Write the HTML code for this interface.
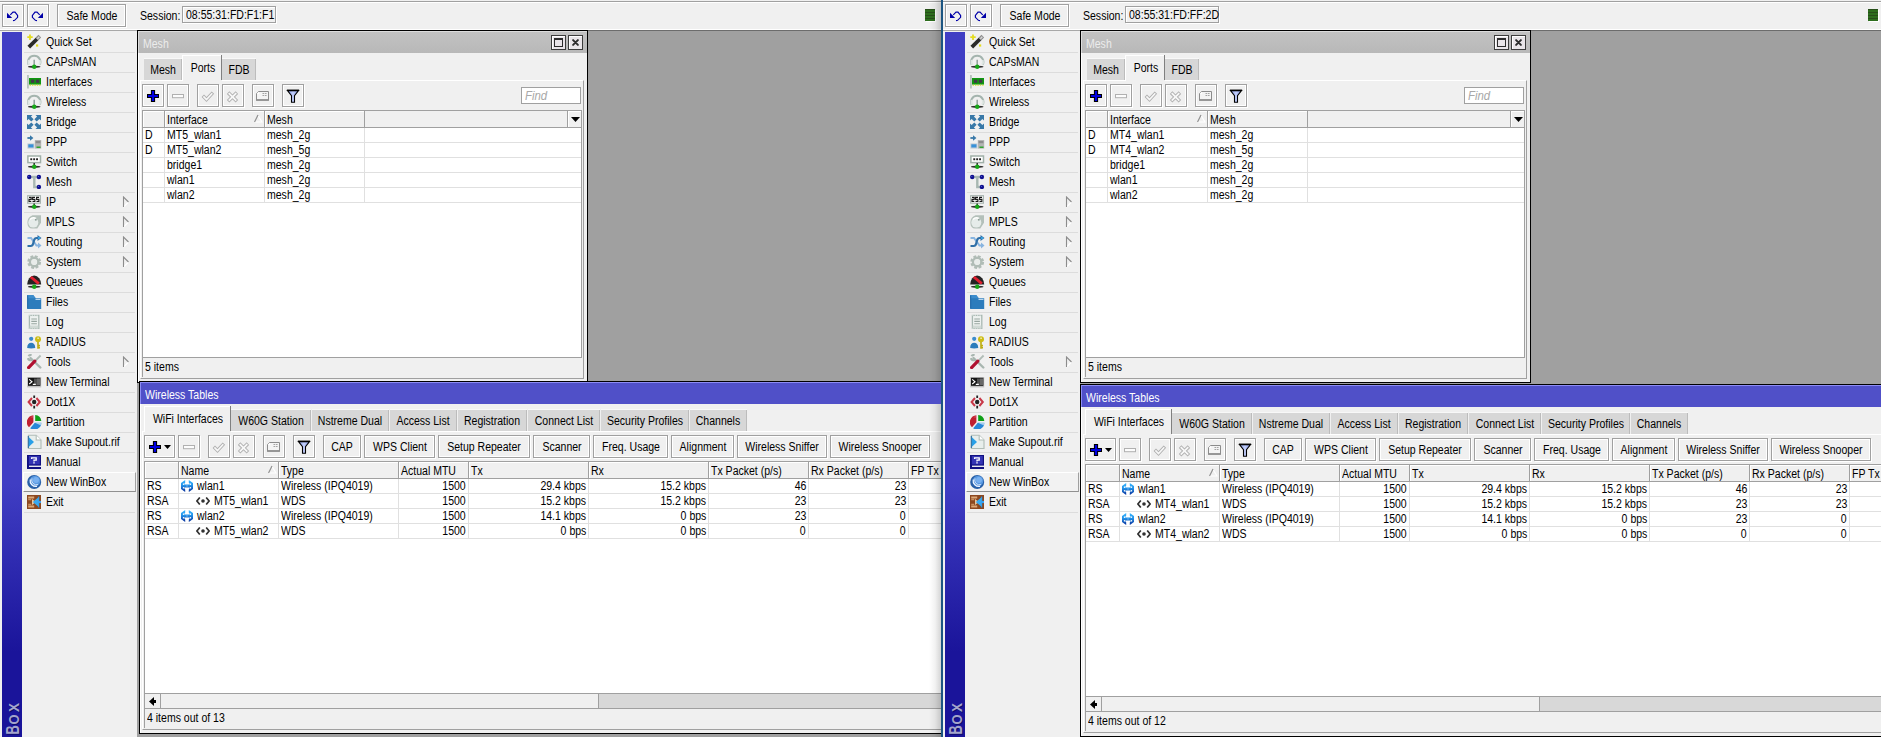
<!DOCTYPE html><html><head><meta charset="utf-8"><title>WinBox</title><style>
*{box-sizing:border-box}
html,body{margin:0;padding:0}
body{width:1881px;height:737px;overflow:hidden;background:#f0f0f0;font-family:"Liberation Sans",sans-serif;font-size:12px;color:#000;position:relative}
.t,.tc,.tr2{display:inline-block;white-space:nowrap;transform:scaleX(.877);transform-origin:0 50%}
.tc{transform-origin:50% 50%}
.tr2{transform-origin:100% 50%}
.app{position:absolute;top:0;height:737px;overflow:hidden;background:#f0f0f0}
.sep{position:absolute;left:941px;top:0;width:2px;height:737px;background:#1c5582}
.shadow{position:absolute;left:929px;top:0;width:12px;height:737px;background:linear-gradient(to right,rgba(0,0,0,0),rgba(0,0,0,.05) 50%,rgba(0,0,0,.17))}
.topline{position:absolute;left:0;right:0;top:1px;height:2px;background:#a0a0a0;border-bottom:1px solid #fff}
.botline{position:absolute;left:0;right:0;top:29px;height:2px;background:#a8a8a8;border-top:1px solid #fff}
.btn{position:absolute;border:1px solid #a0a0a0;box-shadow:inset 1px 1px 0 #fff,inset -1px -1px 0 #fff,1px 1px 0 #fff;background:#f0f0f0;display:flex;align-items:center;justify-content:center;white-space:nowrap;overflow:visible}
.btn.tb{display:block;text-align:center}
.btn.tb .tc{position:relative;left:50%;margin-left:-150px;width:300px;text-align:center}
.lbl{position:absolute;white-space:nowrap}
.sess{position:absolute;border:1px solid #a0a0a0;box-shadow:inset 1px 1px 0 #fff,1px 1px 0 #fff;line-height:16px;padding-left:3px;white-space:nowrap;background:#f0f0f0}
.led{position:absolute;width:10px;height:12px;background:repeating-linear-gradient(#274f19 0,#274f19 1px,#2e6e1e 1px,#2e6e1e 3px);box-shadow:1px 1px 0 #fff}
.strip{position:absolute;left:2px;top:32px;width:20px;height:705px;background:linear-gradient(#403ec4 0,#403ec4 64%,#1a149a 88%,#1a149a 100%);overflow:hidden}
.boxsvg{position:absolute;left:0;top:645px}
.boxtxt{position:absolute;left:2px;top:705px;transform-origin:0 0;transform:rotate(-90deg);color:#d8d8e8;font-size:17px;line-height:17px;white-space:nowrap;letter-spacing:.5px}
.side{position:absolute;left:22px;top:32px;width:115px;height:705px}
.mi{position:absolute;left:2px;width:111px;height:21px;line-height:20px;border-bottom:1px solid #dcdcdc;white-space:nowrap}
.mi .ico{position:absolute;left:3px;top:2px;width:15px;height:16px}
.mi .ico svg{display:block}
.mi .t{position:absolute;left:22px;top:0}
.mi .arr{position:absolute;left:98px;top:4px;width:8px;height:12px}
.mi .arr svg{display:block}
.mi.hl{left:1px;width:113px;height:20px;background:#f2f2f2;border-left:1px solid #fff;border-top:1px solid #fff;border-right:1px solid #a0a0a0;border-bottom:1px solid #909090;line-height:18px;z-index:2}
.mi.hl .ico{left:3px;top:1px}
.mi.hl .t{left:22px}
.mdi{position:absolute;background:#a0a0a0;border-top:1px solid #6c6c6c}
.win{position:absolute;background:#f0f0f0;overflow:hidden;border:0}
.win:before{content:"";position:absolute;left:0;top:0;right:0;bottom:0;border:1px solid #000;box-shadow:inset 1px 1px 0 #fff;pointer-events:none;z-index:5}
.wfull{position:absolute;left:0;top:0;width:100%}
.title{position:absolute;background:#5050c8;color:#fff;line-height:21px;padding-top:2px;padding-left:4px;white-space:nowrap;overflow:hidden;border-left:1px solid #8c8cf4;border-top:1px solid #8c8cf4;z-index:6}
.title.inactive{background:linear-gradient(#c2c2c2,#b8b8b8);color:#ececec;border-color:#dcdcdc}
.capbtn{z-index:7;position:absolute;width:15px;height:15px;border:1px solid #3c3c3c;background:#e9e5e9;box-shadow:inset 1px 1px 0 #fff}
.capbtn svg{position:absolute;left:-1px;top:-1px}
.tab{position:absolute;background:#d7d7d7;text-align:center;line-height:23px;white-space:nowrap;border-right:1px solid #bcbcbc;box-shadow:0 -1px 0 #f8f8f8}
.tab.act{box-shadow:none;background:#f0f0f0;line-height:24px;border-left:1px solid #fff;border-top:1px solid #fff;border-right:0;z-index:2}
.tab.act:after{content:"";position:absolute;right:0;top:-1px;width:1px;height:25px;background:#808080}
.tab .tc{position:relative;left:50%;margin-left:-100px;width:200px;text-align:center}
.pane{position:absolute;border-top:1px solid #fff;border-left:1px solid #fff;border-right:1px solid #a0a0a0;border-bottom:1px solid #a0a0a0}
.find{position:absolute;border:1px solid #a0a0a0;background:#fff;line-height:15px;padding-left:3px;color:#a8a8a8;font-style:italic;font-size:13px;overflow:hidden}
.tbl{position:absolute;background:#fff;border:1px solid #a0a0a0;overflow:hidden}
.th{position:absolute;top:0;height:17px;background:#f0f0f0;border-bottom:1px solid #a0a0a0}
.hc{position:absolute;top:0;height:17px;line-height:18px;padding-left:2px;border-right:1px solid #a0a0a0;border-bottom:1px solid #a0a0a0;box-shadow:inset 1px 1px 0 #fff;background:#f0f0f0;white-space:nowrap;overflow:hidden}
.hc.dd{border-left:1px solid #a0a0a0;border-right:0;padding:0;display:flex;align-items:center;justify-content:center}
.sortarr{position:absolute;top:3px;width:9px;height:9px}
.sortarr svg{display:block}
.tr{position:absolute;left:0;height:15px;border-bottom:1px solid #e0e0e0}
.td{position:absolute;top:0;height:15px;line-height:15px;padding-left:2px;border-right:1px solid #e0e0e0;white-space:nowrap;overflow:hidden}
.td.r{text-align:right;padding-right:2px;padding-left:0}
.td .ci{position:absolute;line-height:0}
.td .ci svg{display:block}
.td .ct{position:absolute;top:0}
.status{position:absolute;border-left:1px solid #a0a0a0;line-height:18px;padding-left:2px;white-space:nowrap}
.hscroll{position:absolute;background:#d8d8d8;border-top:1px solid #a0a0a0;border-bottom:1px solid #a0a0a0;border-left:1px solid #a0a0a0}
.hscroll .sbtn{position:absolute;left:0;top:0;width:16px;height:14px;background:#f0f0f0;border-right:1px solid #a0a0a0;display:flex;align-items:center;justify-content:center}
.hscroll .thumb{position:absolute;top:0;height:14px;background:#f0f0f0;border-right:1px solid #a0a0a0}
.dda{margin-left:3px}
</style></head><body><div class="app" style="left:0px;width:941px"><div class="topline"></div><div class="botline"></div><div class="btn " style="left:2px;top:4px;width:22px;height:23px"><svg width="12" height="11" viewBox="0 0 12 11" style="margin-top:1px"><path d="M0 1.800V7h5.200z" fill="#0000a8"/><path d="M3.300 3.800L6 1.100h2L10.600 4.400v1.900L7.600 9.300 6 9.600" fill="none" stroke="#0000a8" stroke-width="1.200"/></svg></div><div class="btn " style="left:27px;top:4px;width:22px;height:23px"><svg width="12" height="11" viewBox="0 0 12 11" style="margin-right:2px;margin-top:1px"><path d="M12 1.800V7H6.800z" fill="#0000a8"/><path d="M8.700 3.800L6 1.100H4L1.400 4.400v1.900L4.400 9.300 6 9.600" fill="none" stroke="#0000a8" stroke-width="1.200"/></svg></div><div class="btn tb" style="left:57px;top:4px;width:69px;height:23px;line-height:23px"><span class="tc">Safe Mode</span></div><div class="lbl" style="left:140px;top:6px;height:20px;line-height:20px"><span class="t">Session:</span></div><div class="sess" style="left:182px;top:6px;width:94px;height:17px"><span class="t">08:55:31:FD:F1:F1</span></div><div class="led" style="left:925px;top:9px"></div><div class="strip"><svg class="boxsvg" width="20" height="60" viewBox="0 0 20 60"><g font-family="Liberation Sans, sans-serif" font-weight="bold" fill="#0c0c6c"><text transform="translate(18.400,58.500) rotate(-90)" font-size="18" textLength="9.200" lengthAdjust="spacingAndGlyphs">B</text><text transform="translate(18.400,48.600) rotate(-90)" font-size="14" textLength="10" lengthAdjust="spacingAndGlyphs">O</text><text transform="translate(18.400,36) rotate(-90)" font-size="14" textLength="9" lengthAdjust="spacingAndGlyphs">X</text></g><g font-family="Liberation Sans, sans-serif" font-weight="bold" fill="#a4a4cc"><text transform="translate(17.400,57.500) rotate(-90)" font-size="18" textLength="9.200" lengthAdjust="spacingAndGlyphs">B</text><text transform="translate(17.400,47.600) rotate(-90)" font-size="14" textLength="10" lengthAdjust="spacingAndGlyphs">O</text><text transform="translate(17.400,35) rotate(-90)" font-size="14" textLength="9" lengthAdjust="spacingAndGlyphs">X</text></g></svg></div><div class="side"><div class="mi" style="top:0px"><span class="ico"><svg width="15" height="15" viewBox="0 0 15 15"><path d="M1.800 13.200L10 5" stroke="#2a2a2a" stroke-width="3.800"/><path d="M9.800 5.200L12.800 2.200" stroke="#8c8c8c" stroke-width="3.800"/><path d="M10.300 4.700L12.300 2.700" stroke="#d8d8d8" stroke-width="1.400"/><path d="M3 0.500v5.400M0.300 3.200h5.400" stroke="#e4dc20" stroke-width="1.800"/><rect x="9" y="10.400" width="2.200" height="2.200" fill="#e4dc20"/></svg></span><span class="t">Quick Set</span></div><div class="mi" style="top:20px"><span class="ico"><svg width="15" height="15" viewBox="0 0 15 15"><path d="M1.600 10.600A6.200 6.200 0 1 1 12.800 10.600" fill="none" stroke="#a4b4ae" stroke-width="1.900"/><path d="M2.200 10.600A5.600 5.600 0 0 1 1.800 6" fill="none" stroke="#dfe6e3" stroke-width="2"/><path d="M12.200 10.600A5.600 5.600 0 0 0 12.600 6" fill="none" stroke="#dfe6e3" stroke-width="2"/><path d="M7.200 5.800v6" stroke="#90a09a" stroke-width="1.500"/><ellipse cx="7.200" cy="12.800" rx="6.300" ry="1.100" fill="#303030"/><circle cx="7.200" cy="12.700" r="2.200" fill="#18a818"/></svg></span><span class="t">CAPsMAN</span></div><div class="mi" style="top:40px"><span class="ico"><svg width="15" height="15" viewBox="0 0 15 15"><rect x="0.200" y="1" width="1.500" height="13.500" fill="#a8b8b2"/><rect x="2" y="4" width="12" height="6.600" fill="#109810"/><rect x="3.900" y="5.600" width="3.400" height="3.200" fill="#403848"/><rect x="8.900" y="5.600" width="3.400" height="3.200" fill="#403848"/><path d="M2.600 11.200h11.400" stroke="#d8d820" stroke-width="1" stroke-dasharray="1.400 1"/></svg></span><span class="t">Interfaces</span></div><div class="mi" style="top:60px"><span class="ico"><svg width="15" height="15" viewBox="0 0 15 15"><path d="M1.600 10.600A6.200 6.200 0 1 1 12.800 10.600" fill="none" stroke="#a4b4ae" stroke-width="1.900"/><path d="M2.200 10.600A5.600 5.600 0 0 1 1.800 6" fill="none" stroke="#dfe6e3" stroke-width="2"/><path d="M12.200 10.600A5.600 5.600 0 0 0 12.600 6" fill="none" stroke="#dfe6e3" stroke-width="2"/><path d="M7.200 5.800v6" stroke="#90a09a" stroke-width="1.500"/><ellipse cx="7.200" cy="12.800" rx="6.300" ry="1.100" fill="#303030"/><circle cx="7.200" cy="12.700" r="2.200" fill="#18a818"/></svg></span><span class="t">Wireless</span></div><div class="mi" style="top:80px"><span class="ico"><svg width="15" height="15" viewBox="0 0 15 15"><g fill="#3878a8"><path d="M0 1h5.500L3.900 2.600 6.600 5.300 4.300 7.600 1.600 4.900 0 6.500z"/><path d="M14 1H8.500l1.600 1.600L7.400 5.300 9.700 7.600l2.700-2.700L14 6.500z"/><path d="M0 15h5.500L3.900 13.400l2.700-2.700L4.300 8.400 1.600 11.100 0 9.500z"/><path d="M14 15H8.500l1.600-1.600-2.700-2.700L9.700 8.400l2.700 2.700L14 9.500z"/></g></svg></span><span class="t">Bridge</span></div><div class="mi" style="top:100px"><span class="ico"><svg width="15" height="15" viewBox="0 0 15 15"><path d="M0.400 4h4" stroke="#3878a8" stroke-width="1.800"/><path d="M3 1.200L6.400 4 3 6.800z" fill="#3878a8"/><rect x="7.800" y="6" width="6.400" height="8.600" fill="#b4b4b4"/><rect x="8.600" y="7" width="4.800" height="2.200" fill="#8c8c8c"/><path d="M9.500 13.200h4" stroke="#10a010" stroke-width="1.200"/><rect x="0.400" y="9.400" width="7" height="5.200" fill="#c4ccd4"/><rect x="1.300" y="10.300" width="5.200" height="3.200" fill="#3890d8"/></svg></span><span class="t">PPP</span></div><div class="mi" style="top:120px"><span class="ico"><svg width="15" height="15" viewBox="0 0 15 15"><rect x="0.900" y="2" width="12.600" height="6.600" fill="#fff" stroke="#a0b0a8" stroke-width="1.500"/><rect x="3.300" y="4.300" width="1.900" height="1.900" fill="#222"/><rect x="6.200" y="4.300" width="1.900" height="1.900" fill="#222"/><rect x="9.100" y="4.300" width="1.900" height="1.900" fill="#222"/><path d="M7.200 9v3" stroke="#2c2c2c" stroke-width="1.500"/><ellipse cx="7.200" cy="12.800" rx="6.300" ry="1.100" fill="#303030"/><circle cx="7.200" cy="12.700" r="2.200" fill="#18a818"/></svg></span><span class="t">Switch</span></div><div class="mi" style="top:140px"><span class="ico"><svg width="15" height="15" viewBox="0 0 15 15"><path d="M2.500 3h9.500M7.300 3v10h4.500" fill="none" stroke="#a8b8b2" stroke-width="2.400"/><circle cx="2.200" cy="3" r="2.200" fill="#101090"/><circle cx="11.900" cy="3" r="2.200" fill="#101090"/><circle cx="11.900" cy="13" r="2.200" fill="#101090"/><circle cx="1.800" cy="2.500" r=".6" fill="#5060d0"/><circle cx="11.500" cy="2.500" r=".6" fill="#5060d0"/><circle cx="11.500" cy="12.500" r=".6" fill="#5060d0"/></svg></span><span class="t">Mesh</span></div><div class="mi" style="top:160px"><span class="ico"><svg width="15" height="15" viewBox="0 0 15 15"><rect x="0.700" y="1.700" width="12.700" height="7.500" fill="#fff" stroke="#a8b4b0" stroke-width="1.200"/><path d="M2 3.400H4.200V5.400H2V7.400H4.300M8 3.400H5.600V5.400H7.900V7.400H5.500M12 3.400H9.600V5.400H11.900V7.400H9.500" fill="none" stroke="#181818" stroke-width="1.100"/><path d="M7.200 9.600v2" stroke="#2c2c2c" stroke-width="1.500"/><ellipse cx="7.200" cy="12.800" rx="6.300" ry="1.100" fill="#303030"/><circle cx="7.200" cy="12.700" r="2.200" fill="#18a818"/></svg></span><span class="t">IP</span><span class="arr"><svg width="8" height="12" viewBox="0 0 8 12"><path d="M6.500 6L1.500 11" stroke="#fff" stroke-width="1.200" fill="none"/><path d="M1.500 11V1l5 5" stroke="#8c8c8c" stroke-width="1.100" fill="none"/></svg></span></div><div class="mi" style="top:180px"><span class="ico"><svg width="15" height="15" viewBox="0 0 15 15"><path d="M5.500 1.200H14v7.600L10.300 14.600H5A4.800 4.800 0 0 1 0.500 9.500 8 8 0 0 1 5.500 1.200z" fill="#b4c0ba"/><circle cx="6.300" cy="8.600" r="5" fill="#e6ecea"/><path d="M3 5.500A5 5 0 0 1 9 4.500" stroke="#fff" stroke-width="1.600" fill="none"/><circle cx="8.800" cy="5.800" r="1" fill="#90a09a"/></svg></span><span class="t">MPLS</span><span class="arr"><svg width="8" height="12" viewBox="0 0 8 12"><path d="M6.500 6L1.500 11" stroke="#fff" stroke-width="1.200" fill="none"/><path d="M1.500 11V1l5 5" stroke="#8c8c8c" stroke-width="1.100" fill="none"/></svg></span></div><div class="mi" style="top:200px"><span class="ico"><svg width="15" height="15" viewBox="0 0 15 15"><path d="M0.500 4h3.500l5.500 7.500h3" fill="none" stroke="#88b4e0" stroke-width="2"/><path d="M11 8.600l3.500 2.900L11 14.400z" fill="#88b4e0"/><path d="M0.500 12h3.300c1.500 0 2-1 2.400-2.500l.8-3c.4-1.500 1-2.500 2.500-2.500h2" fill="none" stroke="#3070a8" stroke-width="2.200"/><path d="M10.500 1L14.500 4 10.500 7z" fill="#3070a8"/><circle cx="12" cy="4" r="1" fill="#38b0f0"/></svg></span><span class="t">Routing</span><span class="arr"><svg width="8" height="12" viewBox="0 0 8 12"><path d="M6.500 6L1.500 11" stroke="#fff" stroke-width="1.200" fill="none"/><path d="M1.500 11V1l5 5" stroke="#8c8c8c" stroke-width="1.100" fill="none"/></svg></span></div><div class="mi" style="top:220px"><span class="ico"><svg width="15" height="15" viewBox="0 0 15 15"><circle cx="7.200" cy="8" r="5.300" fill="none" stroke="#b0bcb6" stroke-width="3.200" stroke-dasharray="2.600 1.560"/><circle cx="7.200" cy="8" r="4.200" fill="none" stroke="#b0bcb6" stroke-width="2.400"/><circle cx="7.200" cy="8" r="2.800" fill="#e8ecea"/></svg></span><span class="t">System</span><span class="arr"><svg width="8" height="12" viewBox="0 0 8 12"><path d="M6.500 6L1.500 11" stroke="#fff" stroke-width="1.200" fill="none"/><path d="M1.500 11V1l5 5" stroke="#8c8c8c" stroke-width="1.100" fill="none"/></svg></span></div><div class="mi" style="top:240px"><span class="ico"><svg width="15" height="15" viewBox="0 0 15 15"><defs><clipPath id="qc"><path d="M0.200 10.600A7 9 0 0 1 14.200 10.600z"/></clipPath></defs><path d="M0.200 10.600A7 9 0 0 1 14.200 10.600z" fill="#242424"/><path d="M2.600 2L11.800 9.600" stroke="#e02030" stroke-width="2.800" clip-path="url(#qc)"/><ellipse cx="7.200" cy="12.800" rx="6.300" ry="1.100" fill="#303030"/><circle cx="7.200" cy="12.700" r="2.200" fill="#18a818"/></svg></span><span class="t">Queues</span></div><div class="mi" style="top:260px"><span class="ico"><svg width="15" height="15" viewBox="0 0 15 15"><path d="M0.200 1h6l2.500 3.200h5.500V15H0.200z" fill="#2c7cbc"/><path d="M0.200 1h6l2.500 3.200H0.200z" fill="#3c8ccc"/><path d="M8.500 5.400h5" stroke="#c8e0f4" stroke-width="1"/><path d="M0.700 1.500v13" stroke="#2068a8" stroke-width="1"/></svg></span><span class="t">Files</span></div><div class="mi" style="top:280px"><span class="ico"><svg width="15" height="15" viewBox="0 0 15 15"><rect x="2.400" y="1.400" width="9.400" height="13.200" fill="#eef2f0" stroke="#a8b8b2" stroke-width="1.300"/><path d="M4.300 5h5.600M4.300 7.400h5.600M4.300 9.800h5.600" stroke="#98a6a0" stroke-width="1.100"/><path d="M2.400 1.200h9.400M2.400 14.800h9.400" stroke="#eef2f0" stroke-width="1.200" stroke-dasharray="1 1.400"/><path d="M2.400 11.500h9.400v3H2.400z" fill="#c4d0ca" opacity=".7"/></svg></span><span class="t">Log</span></div><div class="mi" style="top:300px"><span class="ico"><svg width="15" height="15" viewBox="0 0 15 15"><circle cx="4.200" cy="4.800" r="2.100" fill="#3c8ccc"/><path d="M0.200 13.500a4 4.800 0 0 1 8 0v.5a8 3 0 0 1-8 0z" fill="#2c7cbc"/><circle cx="11" cy="5.200" r="3" fill="#ccbc14"/><rect x="10.200" y="3.600" width="1.800" height="1.200" fill="#f4f0c0"/><path d="M11 8v6.800M11 11.600h2M11 13.800h2" stroke="#bcac10" stroke-width="1.600" fill="none"/></svg></span><span class="t">RADIUS</span></div><div class="mi" style="top:320px"><span class="ico"><svg width="15" height="15" viewBox="0 0 15 15"><path d="M3.500 4l9.800 9.500" stroke="#a8b6b0" stroke-width="2.400" stroke-linecap="round"/><path d="M0.800 4.200a3.200 3.200 0 0 0 4.800 1.600M4.600 1a3.200 3.200 0 0 0-3.200 1.200" stroke="#a8b6b0" stroke-width="2" fill="none"/><path d="M13.600 1.500L8 7.200" stroke="#b0bcb6" stroke-width="1.800"/><path d="M7.800 7.200L1.600 13.600" stroke="#b01030" stroke-width="3.200" stroke-linecap="round"/></svg></span><span class="t">Tools</span><span class="arr"><svg width="8" height="12" viewBox="0 0 8 12"><path d="M6.500 6L1.500 11" stroke="#fff" stroke-width="1.200" fill="none"/><path d="M1.500 11V1l5 5" stroke="#8c8c8c" stroke-width="1.100" fill="none"/></svg></span></div><div class="mi" style="top:340px"><span class="ico"><svg width="15" height="15" viewBox="0 0 15 15"><rect x="0.200" y="3" width="14" height="10.400" fill="#c0c0c0"/><rect x="1" y="3.800" width="12.400" height="8" fill="#141414"/><rect x="7" y="4.600" width="6" height="6.400" fill="#505050"/><rect x="10" y="4.600" width="3" height="6.400" fill="#686868"/><path d="M2.200 5.400l2.800 2.300-2.800 2.300M5.800 10.400h3" stroke="#fff" stroke-width="1.100" fill="none"/></svg></span><span class="t">New Terminal</span></div><div class="mi" style="top:360px"><span class="ico"><svg width="15" height="15" viewBox="0 0 15 15"><path d="M5 4L1.600 8 5 12M9.400 4l3.400 4-3.400 4" fill="none" stroke="#c83848" stroke-width="2"/><path d="M7.200 1.500v2.600M7.200 11.800v2.600" stroke="#222" stroke-width="1.800"/><circle cx="7.200" cy="8" r="2.200" fill="#222"/></svg></span><span class="t">Dot1X</span></div><div class="mi" style="top:380px"><span class="ico"><svg width="15" height="15" viewBox="0 0 15 15"><path d="M6.400 8.200V1.200A7 7 0 0 0 2 13.200z" fill="#c02030"/><path d="M8.200 7V1A6.800 6.800 0 0 1 14.300 7z" fill="#10a018"/><path d="M7.800 8.800h6.600A7 7 0 0 1 3.200 14.200z" fill="#2888d8"/><path d="M7.800 8.800h6.600a7 7 0 0 1-.8 2.400z" fill="#e0ecf8" opacity=".7"/><path d="M3.500 3.500a6 6 0 0 1 2.400-1.800v2z" fill="#e06070" opacity=".6"/></svg></span><span class="t">Partition</span></div><div class="mi" style="top:400px"><span class="ico"><svg width="15" height="15" viewBox="0 0 15 15"><path d="M1.400 1.200h7.800L14 6v8.600H1.400z" fill="#e8eeec" stroke="#b0bcb6" stroke-width="1.100"/><path d="M9.200 1.200V6H14" fill="#fff" stroke="#b0bcb6" stroke-width="1.100"/><path d="M1.600 3v10l5.400-5z" fill="#28a0e8"/><path d="M1.400 2v12" stroke="#3878a8" stroke-width="1.300"/></svg></span><span class="t">Make Supout.rif</span></div><div class="mi" style="top:420px"><span class="ico"><svg width="15" height="15" viewBox="0 0 15 15"><rect x="0" y="1" width="14" height="14" fill="#101080"/><rect x="1.800" y="2" width="11" height="8.400" fill="#3434b4"/><path d="M4.600 5V3.800h4.600v2.300H7V7.400" fill="none" stroke="#fff" stroke-width="1.300"/><rect x="6.300" y="8.200" width="1.400" height="1.300" fill="#fff"/><path d="M2 12.300h12" stroke="#e8e8f0" stroke-width="1.400"/></svg></span><span class="t">Manual</span></div><div class="mi hl" style="top:440px"><span class="ico"><svg width="15" height="15" viewBox="0 0 15 15"><circle cx="7.200" cy="8" r="7" fill="#2860a8"/><circle cx="8" cy="7" r="5.300" fill="#5898e0"/><circle cx="9" cy="6" r="3" fill="#78b0f0"/><path d="M3.200 5.500A5.800 5.800 0 0 0 10 12.300" fill="none" stroke="#f0f6ff" stroke-width="1.200"/><path d="M5 4.400A4.800 4.800 0 0 0 11 10.600" fill="none" stroke="#d0e0f8" stroke-width="1"/></svg></span><span class="t">New WinBox</span></div><div class="mi" style="top:460px"><span class="ico"><svg width="15" height="15" viewBox="0 0 15 15"><rect x="0" y="1" width="14" height="14" fill="#8c4820"/><path d="M1.200 3.500h6M1.200 12.500h6" stroke="#dca878" stroke-width="1.800"/><path d="M1.200 5.500h3M1.200 10.500h3" stroke="#c89060" stroke-width="1.400"/><path d="M5 5l4 3-4 3z" fill="#e8c8a0"/><path d="M11.600 2.500v11" stroke="#3080c0" stroke-width="1.400"/><path d="M11.800 3L5.800 8l6 5z" fill="#38a8f0"/><path d="M11 8h3" stroke="#38a0f0" stroke-width="2.200"/></svg></span><span class="t">Exit</span></div></div><div class="mdi" style="left:137px;top:30px;width:804px;height:707px"></div><div class="win" style="left:137px;top:30px;width:451px;height:353px"><div class="wfull" style="height:353px"><div class="title inactive" style="left:1px;top:1px;width:449px;height:22px"><span class="t">Mesh</span></div><div class="capbtn" style="left:414px;top:5px"><svg width="15" height="15" viewBox="0 0 15 15"><rect x="3.500" y="3.500" width="8" height="8" fill="#e9e5e9" stroke="#2c2c2c"/><path d="M3 4h9" stroke="#2c2c2c" stroke-width="2"/></svg></div><div class="capbtn" style="left:431px;top:5px"><svg width="15" height="15" viewBox="0 0 15 15"><path d="M5.100 5.100l4.800 4.800M9.900 5.100l-4.800 4.800" stroke="#2c2c2c" stroke-width="2" stroke-linecap="round"/></svg></div><div class="tab" style="left:7px;top:29px;width:38px;height:21px"><span class="tc">Mesh</span></div><div class="tab act" style="left:45px;top:25px;width:40px;height:26px"><span class="tc">Ports</span></div><div class="tab" style="left:85px;top:29px;width:34px;height:21px"><span class="tc">FDB</span></div><div class="pane" style="left:3px;top:50px;width:444px;height:299px"></div><div class="btn " style="left:5px;top:54px;width:22px;height:23px"><svg width="12" height="12" viewBox="0 0 12 12"><path d="M6 0v12M0 6h12" stroke="#000" stroke-width="4.200"/><path d="M6 1v10M1 6h10" stroke="#0000e0" stroke-width="2.200"/></svg></div><div class="btn " style="left:30px;top:54px;width:22px;height:23px"><svg width="12" height="7" viewBox="0 0 12 7"><rect x="0.500" y="2.500" width="11" height="3.200" fill="#fcfcfc" stroke="#b0b0b0"/></svg></div><div class="btn " style="left:60px;top:54px;width:22px;height:23px"><svg width="14" height="12" viewBox="0 0 14 12"><path d="M1.800 5.800L5.500 9.500 11.900 2.700" fill="none" stroke="#b0b0b0" stroke-width="3.400" stroke-linejoin="miter"/><path d="M2.400 6.400L5.500 9.500 11.300 3.300" fill="none" stroke="#f8f8f8" stroke-width="1.600"/></svg></div><div class="btn " style="left:85px;top:54px;width:22px;height:23px"><svg width="14" height="14" viewBox="0 0 14 14"><path d="M2.100 3.600l8.800 8.700M10.900 3.600l-8.800 8.700" fill="none" stroke="#b0b0b0" stroke-width="3.600"/><path d="M2.700 4.200l7.600 7.500M10.300 4.200l-7.600 7.500" fill="none" stroke="#f8f8f8" stroke-width="1.800"/></svg></div><div class="btn " style="left:115px;top:54px;width:22px;height:23px"><svg width="14" height="13" viewBox="0 0 14 13"><path d="M2.500 2.500H12.500V11H0.500V4.500z" fill="#f4f4f4" stroke="#8c8c8c"/><path d="M0 11h13" stroke="#8c8c8c" stroke-width="1.600"/><path d="M6.500 4.500h1.800M9 4.500h1.600M6.500 6.500h1.800M9 6.500h1.600" stroke="#a4a4a4"/><rect x="1.500" y="3.500" width="1.600" height="1.600" fill="#fff"/></svg></div><div class="btn " style="left:145px;top:54px;width:22px;height:23px"><svg width="14" height="15" viewBox="0 0 14 15"><defs><linearGradient id="fg" x1="0" y1="0" x2="1" y2="0"><stop offset="0" stop-color="#7c90dc"/><stop offset=".5" stop-color="#c4d0fc"/><stop offset="1" stop-color="#7c90dc"/></linearGradient></defs><path d="M1.500 2.600H12.500L8.500 7.600V14.200H5.500V7.600z" fill="url(#fg)" stroke="#000" stroke-width="1.100" stroke-linejoin="miter"/><path d="M0.900 2.300h12.200" stroke="#000" stroke-width="1.500"/></svg></div><div class="find" style="left:384px;top:57px;width:60px;height:17px"><span class="t">Find</span></div><div class="tbl" style="left:5px;top:80px;width:440px;height:248px"><div class="th" style="left:0;width:440px"></div><div class="hc" style="left:0px;width:22px"><span class="t"></span></div><div class="hc" style="left:22px;width:100px"><span class="t">Interface</span></div><div class="hc" style="left:122px;width:100px"><span class="t">Mesh</span></div><div class="sortarr" style="left:111px"><svg width="9" height="9" viewBox="0 0 9 9"><path d="M4 1.500L8 8H0.500" stroke="#fff" stroke-width="1.200" fill="none"/><path d="M0.500 8L4 1" stroke="#909090" stroke-width="1.200" fill="none"/></svg></div><div class="hc dd" style="left:424px;width:15px"><svg width="9" height="5" viewBox="0 0 9 5"><path d="M0 0h9L4.500 5z" fill="#000"/></svg></div><div class="tr" style="top:17px;width:438px"><div class="td" style="left:0;width:22px"><span class="t">D</span></div><div class="td" style="left:22px;width:100px"><span class="t">MT5_wlan1</span></div><div class="td" style="left:122px;width:100px"><span class="t">mesh_2g</span></div></div><div class="tr" style="top:32px;width:438px"><div class="td" style="left:0;width:22px"><span class="t">D</span></div><div class="td" style="left:22px;width:100px"><span class="t">MT5_wlan2</span></div><div class="td" style="left:122px;width:100px"><span class="t">mesh_5g</span></div></div><div class="tr" style="top:47px;width:438px"><div class="td" style="left:0;width:22px"><span class="t"></span></div><div class="td" style="left:22px;width:100px"><span class="t">bridge1</span></div><div class="td" style="left:122px;width:100px"><span class="t">mesh_2g</span></div></div><div class="tr" style="top:62px;width:438px"><div class="td" style="left:0;width:22px"><span class="t"></span></div><div class="td" style="left:22px;width:100px"><span class="t">wlan1</span></div><div class="td" style="left:122px;width:100px"><span class="t">mesh_2g</span></div></div><div class="tr" style="top:77px;width:438px"><div class="td" style="left:0;width:22px"><span class="t"></span></div><div class="td" style="left:22px;width:100px"><span class="t">wlan2</span></div><div class="td" style="left:122px;width:100px"><span class="t">mesh_2g</span></div></div></div><div class="status" style="left:5px;top:328px;width:440px;height:19px"><span class="t">5 items</span></div></div></div><div class="win act" style="left:139px;top:381px;width:1000px;height:353px"><div class="title" style="left:1px;top:1px;width:1000px;height:22px"><span class="t">Wireless Tables</span></div><div class="tab act" style="left:5px;top:25px;width:87px;height:26px"><span class="tc">WiFi Interfaces</span></div><div class="tab" style="left:92px;top:29px;width:80px;height:21px"><span class="tc">W60G Station</span></div><div class="tab" style="left:173px;top:29px;width:77px;height:21px"><span class="tc">Nstreme Dual</span></div><div class="tab" style="left:251px;top:29px;width:67px;height:21px"><span class="tc">Access List</span></div><div class="tab" style="left:319px;top:29px;width:69px;height:21px"><span class="tc">Registration</span></div><div class="tab" style="left:389px;top:29px;width:72px;height:21px"><span class="tc">Connect List</span></div><div class="tab" style="left:462px;top:29px;width:88px;height:21px"><span class="tc">Security Profiles</span></div><div class="tab" style="left:551px;top:29px;width:57px;height:21px"><span class="tc">Channels</span></div><div class="pane" style="left:3px;top:50px;width:1000px;height:299px"></div><div class="btn add" style="left:5px;top:54px;width:31px;height:23px"><svg width="12" height="12" viewBox="0 0 12 12"><path d="M6 0v12M0 6h12" stroke="#000" stroke-width="4.200"/><path d="M6 1v10M1 6h10" stroke="#0000e0" stroke-width="2.200"/></svg><svg class="dda" width="7" height="4" viewBox="0 0 7 4"><path d="M0 0h7L3.500 4z" fill="#000"/></svg></div><div class="btn " style="left:39px;top:54px;width:22px;height:23px"><svg width="12" height="7" viewBox="0 0 12 7"><rect x="0.500" y="2.500" width="11" height="3.200" fill="#fcfcfc" stroke="#b0b0b0"/></svg></div><div class="btn " style="left:69px;top:54px;width:22px;height:23px"><svg width="14" height="12" viewBox="0 0 14 12"><path d="M1.800 5.800L5.500 9.500 11.900 2.700" fill="none" stroke="#b0b0b0" stroke-width="3.400" stroke-linejoin="miter"/><path d="M2.400 6.400L5.500 9.500 11.300 3.300" fill="none" stroke="#f8f8f8" stroke-width="1.600"/></svg></div><div class="btn " style="left:94px;top:54px;width:22px;height:23px"><svg width="14" height="14" viewBox="0 0 14 14"><path d="M2.100 3.600l8.800 8.700M10.900 3.600l-8.800 8.700" fill="none" stroke="#b0b0b0" stroke-width="3.600"/><path d="M2.700 4.200l7.600 7.500M10.300 4.200l-7.600 7.500" fill="none" stroke="#f8f8f8" stroke-width="1.800"/></svg></div><div class="btn " style="left:124px;top:54px;width:22px;height:23px"><svg width="14" height="13" viewBox="0 0 14 13"><path d="M2.500 2.500H12.500V11H0.500V4.500z" fill="#f4f4f4" stroke="#8c8c8c"/><path d="M0 11h13" stroke="#8c8c8c" stroke-width="1.600"/><path d="M6.500 4.500h1.800M9 4.500h1.600M6.500 6.500h1.800M9 6.500h1.600" stroke="#a4a4a4"/><rect x="1.500" y="3.500" width="1.600" height="1.600" fill="#fff"/></svg></div><div class="btn " style="left:154px;top:54px;width:22px;height:23px"><svg width="14" height="15" viewBox="0 0 14 15"><defs><linearGradient id="fg" x1="0" y1="0" x2="1" y2="0"><stop offset="0" stop-color="#7c90dc"/><stop offset=".5" stop-color="#c4d0fc"/><stop offset="1" stop-color="#7c90dc"/></linearGradient></defs><path d="M1.500 2.600H12.500L8.500 7.600V14.200H5.500V7.600z" fill="url(#fg)" stroke="#000" stroke-width="1.100" stroke-linejoin="miter"/><path d="M0.900 2.300h12.200" stroke="#000" stroke-width="1.500"/></svg></div><div class="btn tb" style="left:184px;top:54px;width:38px;height:23px;line-height:23px"><span class="tc">CAP</span></div><div class="btn tb" style="left:225px;top:54px;width:71px;height:23px;line-height:23px"><span class="tc">WPS Client</span></div><div class="btn tb" style="left:299px;top:54px;width:92px;height:23px;line-height:23px"><span class="tc">Setup Repeater</span></div><div class="btn tb" style="left:394px;top:54px;width:57px;height:23px;line-height:23px"><span class="tc">Scanner</span></div><div class="btn tb" style="left:454px;top:54px;width:75px;height:23px;line-height:23px"><span class="tc">Freq. Usage</span></div><div class="btn tb" style="left:532px;top:54px;width:63px;height:23px;line-height:23px"><span class="tc">Alignment</span></div><div class="btn tb" style="left:598px;top:54px;width:90px;height:23px;line-height:23px"><span class="tc">Wireless Sniffer</span></div><div class="btn tb" style="left:691px;top:54px;width:100px;height:23px;line-height:23px"><span class="tc">Wireless Snooper</span></div><div class="tbl" style="left:5px;top:80px;width:993px;height:233px"><div class="th" style="left:0;width:993px"></div><div class="hc" style="left:0px;width:34px"><span class="t"></span></div><div class="hc" style="left:34px;width:100px"><span class="t">Name</span></div><div class="hc" style="left:134px;width:120px"><span class="t">Type</span></div><div class="hc" style="left:254px;width:70px"><span class="t">Actual MTU</span></div><div class="hc" style="left:324px;width:120px"><span class="t">Tx</span></div><div class="hc" style="left:444px;width:120px"><span class="t">Rx</span></div><div class="hc" style="left:564px;width:100px"><span class="t">Tx Packet (p/s)</span></div><div class="hc" style="left:664px;width:100px"><span class="t">Rx Packet (p/s)</span></div><div class="hc" style="left:764px;width:100px"><span class="t">FP Tx</span></div><div class="sortarr" style="left:123px"><svg width="9" height="9" viewBox="0 0 9 9"><path d="M4 1.500L8 8H0.500" stroke="#fff" stroke-width="1.200" fill="none"/><path d="M0.500 8L4 1" stroke="#909090" stroke-width="1.200" fill="none"/></svg></div><div class="tr" style="top:17px;width:993px"><div class="td" style="left:0;width:34px"><span class="t">RS</span></div><div class="td nm" style="left:34px;width:100px"><span class="ci" style="left:2px;top:1px"><svg class="wi" width="12" height="12" viewBox="0 0 12 12"><defs><linearGradient id="wg" x1="0" y1="0" x2="0" y2="1"><stop offset="0" stop-color="#38b8ff"/><stop offset=".45" stop-color="#2090e8"/><stop offset="1" stop-color="#082c98"/></linearGradient></defs><path d="M4.200 0L0 3v6l4.200 3V9.300L3.600 8.800V7.600h4.800v1.200L7.800 9.300V12L12 9V3L7.800 0v2.700l.6.500v1.200H3.600V3.200l.6-.5z" fill="url(#wg)"/><g fill="#fff"><rect x="1.900" y="3.500" width="1.400" height="1.400"/><rect x="1.900" y="7.100" width="1.400" height="1.400"/><rect x="8.700" y="3.500" width="1.400" height="1.400"/><rect x="8.700" y="7.100" width="1.400" height="1.400"/><rect x="5.500" y="5.300" width="1" height="1.400" opacity=".5"/></g></svg></span><span class="ct" style="left:18px"><span class="t">wlan1</span></span></div><div class="td" style="left:134px;width:120px"><span class="t">Wireless (IPQ4019)</span></div><div class="td r" style="left:254px;width:70px"><span class="tr2">1500</span></div><div class="td r" style="left:324px;width:120px"><span class="tr2">29.4 kbps</span></div><div class="td r" style="left:444px;width:120px"><span class="tr2">15.2 kbps</span></div><div class="td r" style="left:564px;width:100px"><span class="tr2">46</span></div><div class="td r" style="left:664px;width:100px"><span class="tr2">23</span></div><div class="td" style="left:764px;width:100px"></div></div><div class="tr" style="top:32px;width:993px"><div class="td" style="left:0;width:34px"><span class="t">RSA</span></div><div class="td nm" style="left:34px;width:100px"><span class="ci" style="left:17px;top:3px"><svg class="wd" width="14" height="8" viewBox="0 0 14 8"><path d="M3.800 0.500L0.900 4l2.900 3.500M10.200 0.500l2.900 3.500-2.900 3.500" fill="none" stroke="#303030" stroke-width="1.700"/><circle cx="7" cy="4" r="1.800" fill="#303030"/></svg></span><span class="ct" style="left:34.5px"><span class="t">MT5_wlan1</span></span></div><div class="td" style="left:134px;width:120px"><span class="t">WDS</span></div><div class="td r" style="left:254px;width:70px"><span class="tr2">1500</span></div><div class="td r" style="left:324px;width:120px"><span class="tr2">15.2 kbps</span></div><div class="td r" style="left:444px;width:120px"><span class="tr2">15.2 kbps</span></div><div class="td r" style="left:564px;width:100px"><span class="tr2">23</span></div><div class="td r" style="left:664px;width:100px"><span class="tr2">23</span></div><div class="td" style="left:764px;width:100px"></div></div><div class="tr" style="top:47px;width:993px"><div class="td" style="left:0;width:34px"><span class="t">RS</span></div><div class="td nm" style="left:34px;width:100px"><span class="ci" style="left:2px;top:1px"><svg class="wi" width="12" height="12" viewBox="0 0 12 12"><defs><linearGradient id="wg" x1="0" y1="0" x2="0" y2="1"><stop offset="0" stop-color="#38b8ff"/><stop offset=".45" stop-color="#2090e8"/><stop offset="1" stop-color="#082c98"/></linearGradient></defs><path d="M4.200 0L0 3v6l4.200 3V9.300L3.600 8.800V7.600h4.800v1.200L7.800 9.300V12L12 9V3L7.800 0v2.700l.6.500v1.200H3.600V3.200l.6-.5z" fill="url(#wg)"/><g fill="#fff"><rect x="1.900" y="3.500" width="1.400" height="1.400"/><rect x="1.900" y="7.100" width="1.400" height="1.400"/><rect x="8.700" y="3.500" width="1.400" height="1.400"/><rect x="8.700" y="7.100" width="1.400" height="1.400"/><rect x="5.500" y="5.300" width="1" height="1.400" opacity=".5"/></g></svg></span><span class="ct" style="left:18px"><span class="t">wlan2</span></span></div><div class="td" style="left:134px;width:120px"><span class="t">Wireless (IPQ4019)</span></div><div class="td r" style="left:254px;width:70px"><span class="tr2">1500</span></div><div class="td r" style="left:324px;width:120px"><span class="tr2">14.1 kbps</span></div><div class="td r" style="left:444px;width:120px"><span class="tr2">0 bps</span></div><div class="td r" style="left:564px;width:100px"><span class="tr2">23</span></div><div class="td r" style="left:664px;width:100px"><span class="tr2">0</span></div><div class="td" style="left:764px;width:100px"></div></div><div class="tr" style="top:62px;width:993px"><div class="td" style="left:0;width:34px"><span class="t">RSA</span></div><div class="td nm" style="left:34px;width:100px"><span class="ci" style="left:17px;top:3px"><svg class="wd" width="14" height="8" viewBox="0 0 14 8"><path d="M3.800 0.500L0.900 4l2.900 3.500M10.200 0.500l2.900 3.500-2.900 3.500" fill="none" stroke="#303030" stroke-width="1.700"/><circle cx="7" cy="4" r="1.800" fill="#303030"/></svg></span><span class="ct" style="left:34.5px"><span class="t">MT5_wlan2</span></span></div><div class="td" style="left:134px;width:120px"><span class="t">WDS</span></div><div class="td r" style="left:254px;width:70px"><span class="tr2">1500</span></div><div class="td r" style="left:324px;width:120px"><span class="tr2">0 bps</span></div><div class="td r" style="left:444px;width:120px"><span class="tr2">0 bps</span></div><div class="td r" style="left:564px;width:100px"><span class="tr2">0</span></div><div class="td r" style="left:664px;width:100px"><span class="tr2">0</span></div><div class="td" style="left:764px;width:100px"></div></div></div><div class="hscroll" style="left:5px;top:312px;width:993px;height:16px"><div class="sbtn"><svg width="7" height="9" viewBox="0 0 7 9"><path d="M5 0L0 4.500 5 9z" fill="#000"/><rect x="4" y="3" width="3" height="3" fill="#000"/></svg></div><div class="thumb" style="left:16px;width:438px"></div></div><div class="status" style="left:5px;top:328px;width:993px;height:19px"><span class="t">4 items out of 13</span></div></div></div><div class="shadow"></div><div class="sep"></div><div class="app" style="left:943px;width:938px"><div class="topline"></div><div class="botline"></div><div class="btn " style="left:2px;top:4px;width:22px;height:23px"><svg width="12" height="11" viewBox="0 0 12 11" style="margin-top:1px"><path d="M0 1.800V7h5.200z" fill="#0000a8"/><path d="M3.300 3.800L6 1.100h2L10.600 4.400v1.900L7.600 9.300 6 9.600" fill="none" stroke="#0000a8" stroke-width="1.200"/></svg></div><div class="btn " style="left:27px;top:4px;width:22px;height:23px"><svg width="12" height="11" viewBox="0 0 12 11" style="margin-right:2px;margin-top:1px"><path d="M12 1.800V7H6.800z" fill="#0000a8"/><path d="M8.700 3.800L6 1.100H4L1.400 4.400v1.900L4.400 9.300 6 9.600" fill="none" stroke="#0000a8" stroke-width="1.200"/></svg></div><div class="btn tb" style="left:57px;top:4px;width:69px;height:23px;line-height:23px"><span class="tc">Safe Mode</span></div><div class="lbl" style="left:140px;top:6px;height:20px;line-height:20px"><span class="t">Session:</span></div><div class="sess" style="left:182px;top:6px;width:94px;height:17px"><span class="t">08:55:31:FD:FF:2D</span></div><div class="led" style="left:925px;top:9px"></div><div class="strip"><svg class="boxsvg" width="20" height="60" viewBox="0 0 20 60"><g font-family="Liberation Sans, sans-serif" font-weight="bold" fill="#0c0c6c"><text transform="translate(18.400,58.500) rotate(-90)" font-size="18" textLength="9.200" lengthAdjust="spacingAndGlyphs">B</text><text transform="translate(18.400,48.600) rotate(-90)" font-size="14" textLength="10" lengthAdjust="spacingAndGlyphs">O</text><text transform="translate(18.400,36) rotate(-90)" font-size="14" textLength="9" lengthAdjust="spacingAndGlyphs">X</text></g><g font-family="Liberation Sans, sans-serif" font-weight="bold" fill="#a4a4cc"><text transform="translate(17.400,57.500) rotate(-90)" font-size="18" textLength="9.200" lengthAdjust="spacingAndGlyphs">B</text><text transform="translate(17.400,47.600) rotate(-90)" font-size="14" textLength="10" lengthAdjust="spacingAndGlyphs">O</text><text transform="translate(17.400,35) rotate(-90)" font-size="14" textLength="9" lengthAdjust="spacingAndGlyphs">X</text></g></svg></div><div class="side"><div class="mi" style="top:0px"><span class="ico"><svg width="15" height="15" viewBox="0 0 15 15"><path d="M1.800 13.200L10 5" stroke="#2a2a2a" stroke-width="3.800"/><path d="M9.800 5.200L12.800 2.200" stroke="#8c8c8c" stroke-width="3.800"/><path d="M10.300 4.700L12.300 2.700" stroke="#d8d8d8" stroke-width="1.400"/><path d="M3 0.500v5.400M0.300 3.200h5.400" stroke="#e4dc20" stroke-width="1.800"/><rect x="9" y="10.400" width="2.200" height="2.200" fill="#e4dc20"/></svg></span><span class="t">Quick Set</span></div><div class="mi" style="top:20px"><span class="ico"><svg width="15" height="15" viewBox="0 0 15 15"><path d="M1.600 10.600A6.200 6.200 0 1 1 12.800 10.600" fill="none" stroke="#a4b4ae" stroke-width="1.900"/><path d="M2.200 10.600A5.600 5.600 0 0 1 1.800 6" fill="none" stroke="#dfe6e3" stroke-width="2"/><path d="M12.200 10.600A5.600 5.600 0 0 0 12.600 6" fill="none" stroke="#dfe6e3" stroke-width="2"/><path d="M7.200 5.800v6" stroke="#90a09a" stroke-width="1.500"/><ellipse cx="7.200" cy="12.800" rx="6.300" ry="1.100" fill="#303030"/><circle cx="7.200" cy="12.700" r="2.200" fill="#18a818"/></svg></span><span class="t">CAPsMAN</span></div><div class="mi" style="top:40px"><span class="ico"><svg width="15" height="15" viewBox="0 0 15 15"><rect x="0.200" y="1" width="1.500" height="13.500" fill="#a8b8b2"/><rect x="2" y="4" width="12" height="6.600" fill="#109810"/><rect x="3.900" y="5.600" width="3.400" height="3.200" fill="#403848"/><rect x="8.900" y="5.600" width="3.400" height="3.200" fill="#403848"/><path d="M2.600 11.200h11.400" stroke="#d8d820" stroke-width="1" stroke-dasharray="1.400 1"/></svg></span><span class="t">Interfaces</span></div><div class="mi" style="top:60px"><span class="ico"><svg width="15" height="15" viewBox="0 0 15 15"><path d="M1.600 10.600A6.200 6.200 0 1 1 12.800 10.600" fill="none" stroke="#a4b4ae" stroke-width="1.900"/><path d="M2.200 10.600A5.600 5.600 0 0 1 1.800 6" fill="none" stroke="#dfe6e3" stroke-width="2"/><path d="M12.200 10.600A5.600 5.600 0 0 0 12.600 6" fill="none" stroke="#dfe6e3" stroke-width="2"/><path d="M7.200 5.800v6" stroke="#90a09a" stroke-width="1.500"/><ellipse cx="7.200" cy="12.800" rx="6.300" ry="1.100" fill="#303030"/><circle cx="7.200" cy="12.700" r="2.200" fill="#18a818"/></svg></span><span class="t">Wireless</span></div><div class="mi" style="top:80px"><span class="ico"><svg width="15" height="15" viewBox="0 0 15 15"><g fill="#3878a8"><path d="M0 1h5.500L3.900 2.600 6.600 5.300 4.300 7.600 1.600 4.900 0 6.500z"/><path d="M14 1H8.500l1.600 1.600L7.400 5.300 9.700 7.600l2.700-2.700L14 6.500z"/><path d="M0 15h5.500L3.900 13.400l2.700-2.700L4.300 8.400 1.600 11.100 0 9.500z"/><path d="M14 15H8.500l1.600-1.600-2.700-2.700L9.700 8.400l2.700 2.700L14 9.500z"/></g></svg></span><span class="t">Bridge</span></div><div class="mi" style="top:100px"><span class="ico"><svg width="15" height="15" viewBox="0 0 15 15"><path d="M0.400 4h4" stroke="#3878a8" stroke-width="1.800"/><path d="M3 1.200L6.400 4 3 6.800z" fill="#3878a8"/><rect x="7.800" y="6" width="6.400" height="8.600" fill="#b4b4b4"/><rect x="8.600" y="7" width="4.800" height="2.200" fill="#8c8c8c"/><path d="M9.500 13.200h4" stroke="#10a010" stroke-width="1.200"/><rect x="0.400" y="9.400" width="7" height="5.200" fill="#c4ccd4"/><rect x="1.300" y="10.300" width="5.200" height="3.200" fill="#3890d8"/></svg></span><span class="t">PPP</span></div><div class="mi" style="top:120px"><span class="ico"><svg width="15" height="15" viewBox="0 0 15 15"><rect x="0.900" y="2" width="12.600" height="6.600" fill="#fff" stroke="#a0b0a8" stroke-width="1.500"/><rect x="3.300" y="4.300" width="1.900" height="1.900" fill="#222"/><rect x="6.200" y="4.300" width="1.900" height="1.900" fill="#222"/><rect x="9.100" y="4.300" width="1.900" height="1.900" fill="#222"/><path d="M7.200 9v3" stroke="#2c2c2c" stroke-width="1.500"/><ellipse cx="7.200" cy="12.800" rx="6.300" ry="1.100" fill="#303030"/><circle cx="7.200" cy="12.700" r="2.200" fill="#18a818"/></svg></span><span class="t">Switch</span></div><div class="mi" style="top:140px"><span class="ico"><svg width="15" height="15" viewBox="0 0 15 15"><path d="M2.500 3h9.500M7.300 3v10h4.500" fill="none" stroke="#a8b8b2" stroke-width="2.400"/><circle cx="2.200" cy="3" r="2.200" fill="#101090"/><circle cx="11.900" cy="3" r="2.200" fill="#101090"/><circle cx="11.900" cy="13" r="2.200" fill="#101090"/><circle cx="1.800" cy="2.500" r=".6" fill="#5060d0"/><circle cx="11.500" cy="2.500" r=".6" fill="#5060d0"/><circle cx="11.500" cy="12.500" r=".6" fill="#5060d0"/></svg></span><span class="t">Mesh</span></div><div class="mi" style="top:160px"><span class="ico"><svg width="15" height="15" viewBox="0 0 15 15"><rect x="0.700" y="1.700" width="12.700" height="7.500" fill="#fff" stroke="#a8b4b0" stroke-width="1.200"/><path d="M2 3.400H4.200V5.400H2V7.400H4.300M8 3.400H5.600V5.400H7.900V7.400H5.500M12 3.400H9.600V5.400H11.900V7.400H9.500" fill="none" stroke="#181818" stroke-width="1.100"/><path d="M7.200 9.600v2" stroke="#2c2c2c" stroke-width="1.500"/><ellipse cx="7.200" cy="12.800" rx="6.300" ry="1.100" fill="#303030"/><circle cx="7.200" cy="12.700" r="2.200" fill="#18a818"/></svg></span><span class="t">IP</span><span class="arr"><svg width="8" height="12" viewBox="0 0 8 12"><path d="M6.500 6L1.500 11" stroke="#fff" stroke-width="1.200" fill="none"/><path d="M1.500 11V1l5 5" stroke="#8c8c8c" stroke-width="1.100" fill="none"/></svg></span></div><div class="mi" style="top:180px"><span class="ico"><svg width="15" height="15" viewBox="0 0 15 15"><path d="M5.500 1.200H14v7.600L10.300 14.600H5A4.800 4.800 0 0 1 0.500 9.500 8 8 0 0 1 5.500 1.200z" fill="#b4c0ba"/><circle cx="6.300" cy="8.600" r="5" fill="#e6ecea"/><path d="M3 5.500A5 5 0 0 1 9 4.500" stroke="#fff" stroke-width="1.600" fill="none"/><circle cx="8.800" cy="5.800" r="1" fill="#90a09a"/></svg></span><span class="t">MPLS</span><span class="arr"><svg width="8" height="12" viewBox="0 0 8 12"><path d="M6.500 6L1.500 11" stroke="#fff" stroke-width="1.200" fill="none"/><path d="M1.500 11V1l5 5" stroke="#8c8c8c" stroke-width="1.100" fill="none"/></svg></span></div><div class="mi" style="top:200px"><span class="ico"><svg width="15" height="15" viewBox="0 0 15 15"><path d="M0.500 4h3.500l5.500 7.500h3" fill="none" stroke="#88b4e0" stroke-width="2"/><path d="M11 8.600l3.500 2.900L11 14.400z" fill="#88b4e0"/><path d="M0.500 12h3.300c1.500 0 2-1 2.400-2.500l.8-3c.4-1.500 1-2.500 2.500-2.500h2" fill="none" stroke="#3070a8" stroke-width="2.200"/><path d="M10.500 1L14.500 4 10.500 7z" fill="#3070a8"/><circle cx="12" cy="4" r="1" fill="#38b0f0"/></svg></span><span class="t">Routing</span><span class="arr"><svg width="8" height="12" viewBox="0 0 8 12"><path d="M6.500 6L1.500 11" stroke="#fff" stroke-width="1.200" fill="none"/><path d="M1.500 11V1l5 5" stroke="#8c8c8c" stroke-width="1.100" fill="none"/></svg></span></div><div class="mi" style="top:220px"><span class="ico"><svg width="15" height="15" viewBox="0 0 15 15"><circle cx="7.200" cy="8" r="5.300" fill="none" stroke="#b0bcb6" stroke-width="3.200" stroke-dasharray="2.600 1.560"/><circle cx="7.200" cy="8" r="4.200" fill="none" stroke="#b0bcb6" stroke-width="2.400"/><circle cx="7.200" cy="8" r="2.800" fill="#e8ecea"/></svg></span><span class="t">System</span><span class="arr"><svg width="8" height="12" viewBox="0 0 8 12"><path d="M6.500 6L1.500 11" stroke="#fff" stroke-width="1.200" fill="none"/><path d="M1.500 11V1l5 5" stroke="#8c8c8c" stroke-width="1.100" fill="none"/></svg></span></div><div class="mi" style="top:240px"><span class="ico"><svg width="15" height="15" viewBox="0 0 15 15"><defs><clipPath id="qc"><path d="M0.200 10.600A7 9 0 0 1 14.200 10.600z"/></clipPath></defs><path d="M0.200 10.600A7 9 0 0 1 14.200 10.600z" fill="#242424"/><path d="M2.600 2L11.800 9.600" stroke="#e02030" stroke-width="2.800" clip-path="url(#qc)"/><ellipse cx="7.200" cy="12.800" rx="6.300" ry="1.100" fill="#303030"/><circle cx="7.200" cy="12.700" r="2.200" fill="#18a818"/></svg></span><span class="t">Queues</span></div><div class="mi" style="top:260px"><span class="ico"><svg width="15" height="15" viewBox="0 0 15 15"><path d="M0.200 1h6l2.500 3.200h5.500V15H0.200z" fill="#2c7cbc"/><path d="M0.200 1h6l2.500 3.200H0.200z" fill="#3c8ccc"/><path d="M8.500 5.400h5" stroke="#c8e0f4" stroke-width="1"/><path d="M0.700 1.500v13" stroke="#2068a8" stroke-width="1"/></svg></span><span class="t">Files</span></div><div class="mi" style="top:280px"><span class="ico"><svg width="15" height="15" viewBox="0 0 15 15"><rect x="2.400" y="1.400" width="9.400" height="13.200" fill="#eef2f0" stroke="#a8b8b2" stroke-width="1.300"/><path d="M4.300 5h5.600M4.300 7.400h5.600M4.300 9.800h5.600" stroke="#98a6a0" stroke-width="1.100"/><path d="M2.400 1.200h9.400M2.400 14.800h9.400" stroke="#eef2f0" stroke-width="1.200" stroke-dasharray="1 1.400"/><path d="M2.400 11.500h9.400v3H2.400z" fill="#c4d0ca" opacity=".7"/></svg></span><span class="t">Log</span></div><div class="mi" style="top:300px"><span class="ico"><svg width="15" height="15" viewBox="0 0 15 15"><circle cx="4.200" cy="4.800" r="2.100" fill="#3c8ccc"/><path d="M0.200 13.500a4 4.800 0 0 1 8 0v.5a8 3 0 0 1-8 0z" fill="#2c7cbc"/><circle cx="11" cy="5.200" r="3" fill="#ccbc14"/><rect x="10.200" y="3.600" width="1.800" height="1.200" fill="#f4f0c0"/><path d="M11 8v6.800M11 11.600h2M11 13.800h2" stroke="#bcac10" stroke-width="1.600" fill="none"/></svg></span><span class="t">RADIUS</span></div><div class="mi" style="top:320px"><span class="ico"><svg width="15" height="15" viewBox="0 0 15 15"><path d="M3.500 4l9.800 9.500" stroke="#a8b6b0" stroke-width="2.400" stroke-linecap="round"/><path d="M0.800 4.200a3.200 3.200 0 0 0 4.800 1.600M4.600 1a3.200 3.200 0 0 0-3.200 1.200" stroke="#a8b6b0" stroke-width="2" fill="none"/><path d="M13.600 1.500L8 7.200" stroke="#b0bcb6" stroke-width="1.800"/><path d="M7.800 7.200L1.600 13.600" stroke="#b01030" stroke-width="3.200" stroke-linecap="round"/></svg></span><span class="t">Tools</span><span class="arr"><svg width="8" height="12" viewBox="0 0 8 12"><path d="M6.500 6L1.500 11" stroke="#fff" stroke-width="1.200" fill="none"/><path d="M1.500 11V1l5 5" stroke="#8c8c8c" stroke-width="1.100" fill="none"/></svg></span></div><div class="mi" style="top:340px"><span class="ico"><svg width="15" height="15" viewBox="0 0 15 15"><rect x="0.200" y="3" width="14" height="10.400" fill="#c0c0c0"/><rect x="1" y="3.800" width="12.400" height="8" fill="#141414"/><rect x="7" y="4.600" width="6" height="6.400" fill="#505050"/><rect x="10" y="4.600" width="3" height="6.400" fill="#686868"/><path d="M2.200 5.400l2.800 2.300-2.800 2.300M5.800 10.400h3" stroke="#fff" stroke-width="1.100" fill="none"/></svg></span><span class="t">New Terminal</span></div><div class="mi" style="top:360px"><span class="ico"><svg width="15" height="15" viewBox="0 0 15 15"><path d="M5 4L1.600 8 5 12M9.400 4l3.400 4-3.400 4" fill="none" stroke="#c83848" stroke-width="2"/><path d="M7.200 1.500v2.600M7.200 11.800v2.600" stroke="#222" stroke-width="1.800"/><circle cx="7.200" cy="8" r="2.200" fill="#222"/></svg></span><span class="t">Dot1X</span></div><div class="mi" style="top:380px"><span class="ico"><svg width="15" height="15" viewBox="0 0 15 15"><path d="M6.400 8.200V1.200A7 7 0 0 0 2 13.200z" fill="#c02030"/><path d="M8.200 7V1A6.800 6.800 0 0 1 14.300 7z" fill="#10a018"/><path d="M7.800 8.800h6.600A7 7 0 0 1 3.200 14.200z" fill="#2888d8"/><path d="M7.800 8.800h6.600a7 7 0 0 1-.8 2.400z" fill="#e0ecf8" opacity=".7"/><path d="M3.500 3.500a6 6 0 0 1 2.400-1.800v2z" fill="#e06070" opacity=".6"/></svg></span><span class="t">Partition</span></div><div class="mi" style="top:400px"><span class="ico"><svg width="15" height="15" viewBox="0 0 15 15"><path d="M1.400 1.200h7.800L14 6v8.600H1.400z" fill="#e8eeec" stroke="#b0bcb6" stroke-width="1.100"/><path d="M9.200 1.200V6H14" fill="#fff" stroke="#b0bcb6" stroke-width="1.100"/><path d="M1.600 3v10l5.400-5z" fill="#28a0e8"/><path d="M1.400 2v12" stroke="#3878a8" stroke-width="1.300"/></svg></span><span class="t">Make Supout.rif</span></div><div class="mi" style="top:420px"><span class="ico"><svg width="15" height="15" viewBox="0 0 15 15"><rect x="0" y="1" width="14" height="14" fill="#101080"/><rect x="1.800" y="2" width="11" height="8.400" fill="#3434b4"/><path d="M4.600 5V3.800h4.600v2.300H7V7.400" fill="none" stroke="#fff" stroke-width="1.300"/><rect x="6.300" y="8.200" width="1.400" height="1.300" fill="#fff"/><path d="M2 12.300h12" stroke="#e8e8f0" stroke-width="1.400"/></svg></span><span class="t">Manual</span></div><div class="mi hl" style="top:440px"><span class="ico"><svg width="15" height="15" viewBox="0 0 15 15"><circle cx="7.200" cy="8" r="7" fill="#2860a8"/><circle cx="8" cy="7" r="5.300" fill="#5898e0"/><circle cx="9" cy="6" r="3" fill="#78b0f0"/><path d="M3.200 5.500A5.800 5.800 0 0 0 10 12.300" fill="none" stroke="#f0f6ff" stroke-width="1.200"/><path d="M5 4.400A4.800 4.800 0 0 0 11 10.600" fill="none" stroke="#d0e0f8" stroke-width="1"/></svg></span><span class="t">New WinBox</span></div><div class="mi" style="top:460px"><span class="ico"><svg width="15" height="15" viewBox="0 0 15 15"><rect x="0" y="1" width="14" height="14" fill="#8c4820"/><path d="M1.200 3.500h6M1.200 12.500h6" stroke="#dca878" stroke-width="1.800"/><path d="M1.200 5.500h3M1.200 10.500h3" stroke="#c89060" stroke-width="1.400"/><path d="M5 5l4 3-4 3z" fill="#e8c8a0"/><path d="M11.600 2.500v11" stroke="#3080c0" stroke-width="1.400"/><path d="M11.800 3L5.800 8l6 5z" fill="#38a8f0"/><path d="M11 8h3" stroke="#38a0f0" stroke-width="2.200"/></svg></span><span class="t">Exit</span></div></div><div class="mdi" style="left:137px;top:30px;width:801px;height:707px"></div><div class="win" style="left:137px;top:30px;width:451px;height:353px"><div class="wfull" style="height:353px"><div class="title inactive" style="left:1px;top:1px;width:449px;height:22px"><span class="t">Mesh</span></div><div class="capbtn" style="left:414px;top:5px"><svg width="15" height="15" viewBox="0 0 15 15"><rect x="3.500" y="3.500" width="8" height="8" fill="#e9e5e9" stroke="#2c2c2c"/><path d="M3 4h9" stroke="#2c2c2c" stroke-width="2"/></svg></div><div class="capbtn" style="left:431px;top:5px"><svg width="15" height="15" viewBox="0 0 15 15"><path d="M5.100 5.100l4.800 4.800M9.900 5.100l-4.800 4.800" stroke="#2c2c2c" stroke-width="2" stroke-linecap="round"/></svg></div><div class="tab" style="left:7px;top:29px;width:38px;height:21px"><span class="tc">Mesh</span></div><div class="tab act" style="left:45px;top:25px;width:40px;height:26px"><span class="tc">Ports</span></div><div class="tab" style="left:85px;top:29px;width:34px;height:21px"><span class="tc">FDB</span></div><div class="pane" style="left:3px;top:50px;width:444px;height:299px"></div><div class="btn " style="left:5px;top:54px;width:22px;height:23px"><svg width="12" height="12" viewBox="0 0 12 12"><path d="M6 0v12M0 6h12" stroke="#000" stroke-width="4.200"/><path d="M6 1v10M1 6h10" stroke="#0000e0" stroke-width="2.200"/></svg></div><div class="btn " style="left:30px;top:54px;width:22px;height:23px"><svg width="12" height="7" viewBox="0 0 12 7"><rect x="0.500" y="2.500" width="11" height="3.200" fill="#fcfcfc" stroke="#b0b0b0"/></svg></div><div class="btn " style="left:60px;top:54px;width:22px;height:23px"><svg width="14" height="12" viewBox="0 0 14 12"><path d="M1.800 5.800L5.500 9.500 11.900 2.700" fill="none" stroke="#b0b0b0" stroke-width="3.400" stroke-linejoin="miter"/><path d="M2.400 6.400L5.500 9.500 11.300 3.300" fill="none" stroke="#f8f8f8" stroke-width="1.600"/></svg></div><div class="btn " style="left:85px;top:54px;width:22px;height:23px"><svg width="14" height="14" viewBox="0 0 14 14"><path d="M2.100 3.600l8.800 8.700M10.900 3.600l-8.800 8.700" fill="none" stroke="#b0b0b0" stroke-width="3.600"/><path d="M2.700 4.200l7.600 7.500M10.300 4.200l-7.600 7.500" fill="none" stroke="#f8f8f8" stroke-width="1.800"/></svg></div><div class="btn " style="left:115px;top:54px;width:22px;height:23px"><svg width="14" height="13" viewBox="0 0 14 13"><path d="M2.500 2.500H12.500V11H0.500V4.500z" fill="#f4f4f4" stroke="#8c8c8c"/><path d="M0 11h13" stroke="#8c8c8c" stroke-width="1.600"/><path d="M6.500 4.500h1.800M9 4.500h1.600M6.500 6.500h1.800M9 6.500h1.600" stroke="#a4a4a4"/><rect x="1.500" y="3.500" width="1.600" height="1.600" fill="#fff"/></svg></div><div class="btn " style="left:145px;top:54px;width:22px;height:23px"><svg width="14" height="15" viewBox="0 0 14 15"><defs><linearGradient id="fg" x1="0" y1="0" x2="1" y2="0"><stop offset="0" stop-color="#7c90dc"/><stop offset=".5" stop-color="#c4d0fc"/><stop offset="1" stop-color="#7c90dc"/></linearGradient></defs><path d="M1.500 2.600H12.500L8.500 7.600V14.200H5.500V7.600z" fill="url(#fg)" stroke="#000" stroke-width="1.100" stroke-linejoin="miter"/><path d="M0.900 2.300h12.200" stroke="#000" stroke-width="1.500"/></svg></div><div class="find" style="left:384px;top:57px;width:60px;height:17px"><span class="t">Find</span></div><div class="tbl" style="left:5px;top:80px;width:440px;height:248px"><div class="th" style="left:0;width:440px"></div><div class="hc" style="left:0px;width:22px"><span class="t"></span></div><div class="hc" style="left:22px;width:100px"><span class="t">Interface</span></div><div class="hc" style="left:122px;width:100px"><span class="t">Mesh</span></div><div class="sortarr" style="left:111px"><svg width="9" height="9" viewBox="0 0 9 9"><path d="M4 1.500L8 8H0.500" stroke="#fff" stroke-width="1.200" fill="none"/><path d="M0.500 8L4 1" stroke="#909090" stroke-width="1.200" fill="none"/></svg></div><div class="hc dd" style="left:424px;width:15px"><svg width="9" height="5" viewBox="0 0 9 5"><path d="M0 0h9L4.500 5z" fill="#000"/></svg></div><div class="tr" style="top:17px;width:438px"><div class="td" style="left:0;width:22px"><span class="t">D</span></div><div class="td" style="left:22px;width:100px"><span class="t">MT4_wlan1</span></div><div class="td" style="left:122px;width:100px"><span class="t">mesh_2g</span></div></div><div class="tr" style="top:32px;width:438px"><div class="td" style="left:0;width:22px"><span class="t">D</span></div><div class="td" style="left:22px;width:100px"><span class="t">MT4_wlan2</span></div><div class="td" style="left:122px;width:100px"><span class="t">mesh_5g</span></div></div><div class="tr" style="top:47px;width:438px"><div class="td" style="left:0;width:22px"><span class="t"></span></div><div class="td" style="left:22px;width:100px"><span class="t">bridge1</span></div><div class="td" style="left:122px;width:100px"><span class="t">mesh_2g</span></div></div><div class="tr" style="top:62px;width:438px"><div class="td" style="left:0;width:22px"><span class="t"></span></div><div class="td" style="left:22px;width:100px"><span class="t">wlan1</span></div><div class="td" style="left:122px;width:100px"><span class="t">mesh_2g</span></div></div><div class="tr" style="top:77px;width:438px"><div class="td" style="left:0;width:22px"><span class="t"></span></div><div class="td" style="left:22px;width:100px"><span class="t">wlan2</span></div><div class="td" style="left:122px;width:100px"><span class="t">mesh_2g</span></div></div></div><div class="status" style="left:5px;top:328px;width:440px;height:19px"><span class="t">5 items</span></div></div></div><div class="win act" style="left:137px;top:384px;width:1000px;height:353px"><div class="title" style="left:1px;top:1px;width:1000px;height:22px"><span class="t">Wireless Tables</span></div><div class="tab act" style="left:5px;top:25px;width:87px;height:26px"><span class="tc">WiFi Interfaces</span></div><div class="tab" style="left:92px;top:29px;width:80px;height:21px"><span class="tc">W60G Station</span></div><div class="tab" style="left:173px;top:29px;width:77px;height:21px"><span class="tc">Nstreme Dual</span></div><div class="tab" style="left:251px;top:29px;width:67px;height:21px"><span class="tc">Access List</span></div><div class="tab" style="left:319px;top:29px;width:69px;height:21px"><span class="tc">Registration</span></div><div class="tab" style="left:389px;top:29px;width:72px;height:21px"><span class="tc">Connect List</span></div><div class="tab" style="left:462px;top:29px;width:88px;height:21px"><span class="tc">Security Profiles</span></div><div class="tab" style="left:551px;top:29px;width:57px;height:21px"><span class="tc">Channels</span></div><div class="pane" style="left:3px;top:50px;width:1000px;height:299px"></div><div class="btn add" style="left:5px;top:54px;width:31px;height:23px"><svg width="12" height="12" viewBox="0 0 12 12"><path d="M6 0v12M0 6h12" stroke="#000" stroke-width="4.200"/><path d="M6 1v10M1 6h10" stroke="#0000e0" stroke-width="2.200"/></svg><svg class="dda" width="7" height="4" viewBox="0 0 7 4"><path d="M0 0h7L3.500 4z" fill="#000"/></svg></div><div class="btn " style="left:39px;top:54px;width:22px;height:23px"><svg width="12" height="7" viewBox="0 0 12 7"><rect x="0.500" y="2.500" width="11" height="3.200" fill="#fcfcfc" stroke="#b0b0b0"/></svg></div><div class="btn " style="left:69px;top:54px;width:22px;height:23px"><svg width="14" height="12" viewBox="0 0 14 12"><path d="M1.800 5.800L5.500 9.500 11.900 2.700" fill="none" stroke="#b0b0b0" stroke-width="3.400" stroke-linejoin="miter"/><path d="M2.400 6.400L5.500 9.500 11.300 3.300" fill="none" stroke="#f8f8f8" stroke-width="1.600"/></svg></div><div class="btn " style="left:94px;top:54px;width:22px;height:23px"><svg width="14" height="14" viewBox="0 0 14 14"><path d="M2.100 3.600l8.800 8.700M10.900 3.600l-8.800 8.700" fill="none" stroke="#b0b0b0" stroke-width="3.600"/><path d="M2.700 4.200l7.600 7.500M10.300 4.200l-7.600 7.500" fill="none" stroke="#f8f8f8" stroke-width="1.800"/></svg></div><div class="btn " style="left:124px;top:54px;width:22px;height:23px"><svg width="14" height="13" viewBox="0 0 14 13"><path d="M2.500 2.500H12.500V11H0.500V4.500z" fill="#f4f4f4" stroke="#8c8c8c"/><path d="M0 11h13" stroke="#8c8c8c" stroke-width="1.600"/><path d="M6.500 4.500h1.800M9 4.500h1.600M6.500 6.500h1.800M9 6.500h1.600" stroke="#a4a4a4"/><rect x="1.500" y="3.500" width="1.600" height="1.600" fill="#fff"/></svg></div><div class="btn " style="left:154px;top:54px;width:22px;height:23px"><svg width="14" height="15" viewBox="0 0 14 15"><defs><linearGradient id="fg" x1="0" y1="0" x2="1" y2="0"><stop offset="0" stop-color="#7c90dc"/><stop offset=".5" stop-color="#c4d0fc"/><stop offset="1" stop-color="#7c90dc"/></linearGradient></defs><path d="M1.500 2.600H12.500L8.500 7.600V14.200H5.500V7.600z" fill="url(#fg)" stroke="#000" stroke-width="1.100" stroke-linejoin="miter"/><path d="M0.900 2.300h12.200" stroke="#000" stroke-width="1.500"/></svg></div><div class="btn tb" style="left:184px;top:54px;width:38px;height:23px;line-height:23px"><span class="tc">CAP</span></div><div class="btn tb" style="left:225px;top:54px;width:71px;height:23px;line-height:23px"><span class="tc">WPS Client</span></div><div class="btn tb" style="left:299px;top:54px;width:92px;height:23px;line-height:23px"><span class="tc">Setup Repeater</span></div><div class="btn tb" style="left:394px;top:54px;width:57px;height:23px;line-height:23px"><span class="tc">Scanner</span></div><div class="btn tb" style="left:454px;top:54px;width:75px;height:23px;line-height:23px"><span class="tc">Freq. Usage</span></div><div class="btn tb" style="left:532px;top:54px;width:63px;height:23px;line-height:23px"><span class="tc">Alignment</span></div><div class="btn tb" style="left:598px;top:54px;width:90px;height:23px;line-height:23px"><span class="tc">Wireless Sniffer</span></div><div class="btn tb" style="left:691px;top:54px;width:100px;height:23px;line-height:23px"><span class="tc">Wireless Snooper</span></div><div class="tbl" style="left:5px;top:80px;width:993px;height:233px"><div class="th" style="left:0;width:993px"></div><div class="hc" style="left:0px;width:34px"><span class="t"></span></div><div class="hc" style="left:34px;width:100px"><span class="t">Name</span></div><div class="hc" style="left:134px;width:120px"><span class="t">Type</span></div><div class="hc" style="left:254px;width:70px"><span class="t">Actual MTU</span></div><div class="hc" style="left:324px;width:120px"><span class="t">Tx</span></div><div class="hc" style="left:444px;width:120px"><span class="t">Rx</span></div><div class="hc" style="left:564px;width:100px"><span class="t">Tx Packet (p/s)</span></div><div class="hc" style="left:664px;width:100px"><span class="t">Rx Packet (p/s)</span></div><div class="hc" style="left:764px;width:100px"><span class="t">FP Tx</span></div><div class="sortarr" style="left:123px"><svg width="9" height="9" viewBox="0 0 9 9"><path d="M4 1.500L8 8H0.500" stroke="#fff" stroke-width="1.200" fill="none"/><path d="M0.500 8L4 1" stroke="#909090" stroke-width="1.200" fill="none"/></svg></div><div class="tr" style="top:17px;width:993px"><div class="td" style="left:0;width:34px"><span class="t">RS</span></div><div class="td nm" style="left:34px;width:100px"><span class="ci" style="left:2px;top:1px"><svg class="wi" width="12" height="12" viewBox="0 0 12 12"><defs><linearGradient id="wg" x1="0" y1="0" x2="0" y2="1"><stop offset="0" stop-color="#38b8ff"/><stop offset=".45" stop-color="#2090e8"/><stop offset="1" stop-color="#082c98"/></linearGradient></defs><path d="M4.200 0L0 3v6l4.200 3V9.300L3.600 8.800V7.600h4.800v1.200L7.800 9.300V12L12 9V3L7.800 0v2.700l.6.500v1.200H3.600V3.200l.6-.5z" fill="url(#wg)"/><g fill="#fff"><rect x="1.900" y="3.500" width="1.400" height="1.400"/><rect x="1.900" y="7.100" width="1.400" height="1.400"/><rect x="8.700" y="3.500" width="1.400" height="1.400"/><rect x="8.700" y="7.100" width="1.400" height="1.400"/><rect x="5.500" y="5.300" width="1" height="1.400" opacity=".5"/></g></svg></span><span class="ct" style="left:18px"><span class="t">wlan1</span></span></div><div class="td" style="left:134px;width:120px"><span class="t">Wireless (IPQ4019)</span></div><div class="td r" style="left:254px;width:70px"><span class="tr2">1500</span></div><div class="td r" style="left:324px;width:120px"><span class="tr2">29.4 kbps</span></div><div class="td r" style="left:444px;width:120px"><span class="tr2">15.2 kbps</span></div><div class="td r" style="left:564px;width:100px"><span class="tr2">46</span></div><div class="td r" style="left:664px;width:100px"><span class="tr2">23</span></div><div class="td" style="left:764px;width:100px"></div></div><div class="tr" style="top:32px;width:993px"><div class="td" style="left:0;width:34px"><span class="t">RSA</span></div><div class="td nm" style="left:34px;width:100px"><span class="ci" style="left:17px;top:3px"><svg class="wd" width="14" height="8" viewBox="0 0 14 8"><path d="M3.800 0.500L0.900 4l2.900 3.500M10.200 0.500l2.900 3.500-2.900 3.500" fill="none" stroke="#303030" stroke-width="1.700"/><circle cx="7" cy="4" r="1.800" fill="#303030"/></svg></span><span class="ct" style="left:34.5px"><span class="t">MT4_wlan1</span></span></div><div class="td" style="left:134px;width:120px"><span class="t">WDS</span></div><div class="td r" style="left:254px;width:70px"><span class="tr2">1500</span></div><div class="td r" style="left:324px;width:120px"><span class="tr2">15.2 kbps</span></div><div class="td r" style="left:444px;width:120px"><span class="tr2">15.2 kbps</span></div><div class="td r" style="left:564px;width:100px"><span class="tr2">23</span></div><div class="td r" style="left:664px;width:100px"><span class="tr2">23</span></div><div class="td" style="left:764px;width:100px"></div></div><div class="tr" style="top:47px;width:993px"><div class="td" style="left:0;width:34px"><span class="t">RS</span></div><div class="td nm" style="left:34px;width:100px"><span class="ci" style="left:2px;top:1px"><svg class="wi" width="12" height="12" viewBox="0 0 12 12"><defs><linearGradient id="wg" x1="0" y1="0" x2="0" y2="1"><stop offset="0" stop-color="#38b8ff"/><stop offset=".45" stop-color="#2090e8"/><stop offset="1" stop-color="#082c98"/></linearGradient></defs><path d="M4.200 0L0 3v6l4.200 3V9.300L3.600 8.800V7.600h4.800v1.200L7.800 9.300V12L12 9V3L7.800 0v2.700l.6.500v1.200H3.600V3.200l.6-.5z" fill="url(#wg)"/><g fill="#fff"><rect x="1.900" y="3.500" width="1.400" height="1.400"/><rect x="1.900" y="7.100" width="1.400" height="1.400"/><rect x="8.700" y="3.500" width="1.400" height="1.400"/><rect x="8.700" y="7.100" width="1.400" height="1.400"/><rect x="5.500" y="5.300" width="1" height="1.400" opacity=".5"/></g></svg></span><span class="ct" style="left:18px"><span class="t">wlan2</span></span></div><div class="td" style="left:134px;width:120px"><span class="t">Wireless (IPQ4019)</span></div><div class="td r" style="left:254px;width:70px"><span class="tr2">1500</span></div><div class="td r" style="left:324px;width:120px"><span class="tr2">14.1 kbps</span></div><div class="td r" style="left:444px;width:120px"><span class="tr2">0 bps</span></div><div class="td r" style="left:564px;width:100px"><span class="tr2">23</span></div><div class="td r" style="left:664px;width:100px"><span class="tr2">0</span></div><div class="td" style="left:764px;width:100px"></div></div><div class="tr" style="top:62px;width:993px"><div class="td" style="left:0;width:34px"><span class="t">RSA</span></div><div class="td nm" style="left:34px;width:100px"><span class="ci" style="left:17px;top:3px"><svg class="wd" width="14" height="8" viewBox="0 0 14 8"><path d="M3.800 0.500L0.900 4l2.900 3.500M10.200 0.500l2.900 3.500-2.900 3.500" fill="none" stroke="#303030" stroke-width="1.700"/><circle cx="7" cy="4" r="1.800" fill="#303030"/></svg></span><span class="ct" style="left:34.5px"><span class="t">MT4_wlan2</span></span></div><div class="td" style="left:134px;width:120px"><span class="t">WDS</span></div><div class="td r" style="left:254px;width:70px"><span class="tr2">1500</span></div><div class="td r" style="left:324px;width:120px"><span class="tr2">0 bps</span></div><div class="td r" style="left:444px;width:120px"><span class="tr2">0 bps</span></div><div class="td r" style="left:564px;width:100px"><span class="tr2">0</span></div><div class="td r" style="left:664px;width:100px"><span class="tr2">0</span></div><div class="td" style="left:764px;width:100px"></div></div></div><div class="hscroll" style="left:5px;top:312px;width:993px;height:16px"><div class="sbtn"><svg width="7" height="9" viewBox="0 0 7 9"><path d="M5 0L0 4.500 5 9z" fill="#000"/><rect x="4" y="3" width="3" height="3" fill="#000"/></svg></div><div class="thumb" style="left:16px;width:438px"></div></div><div class="status" style="left:5px;top:328px;width:993px;height:19px"><span class="t">4 items out of 12</span></div></div></div></body></html>
